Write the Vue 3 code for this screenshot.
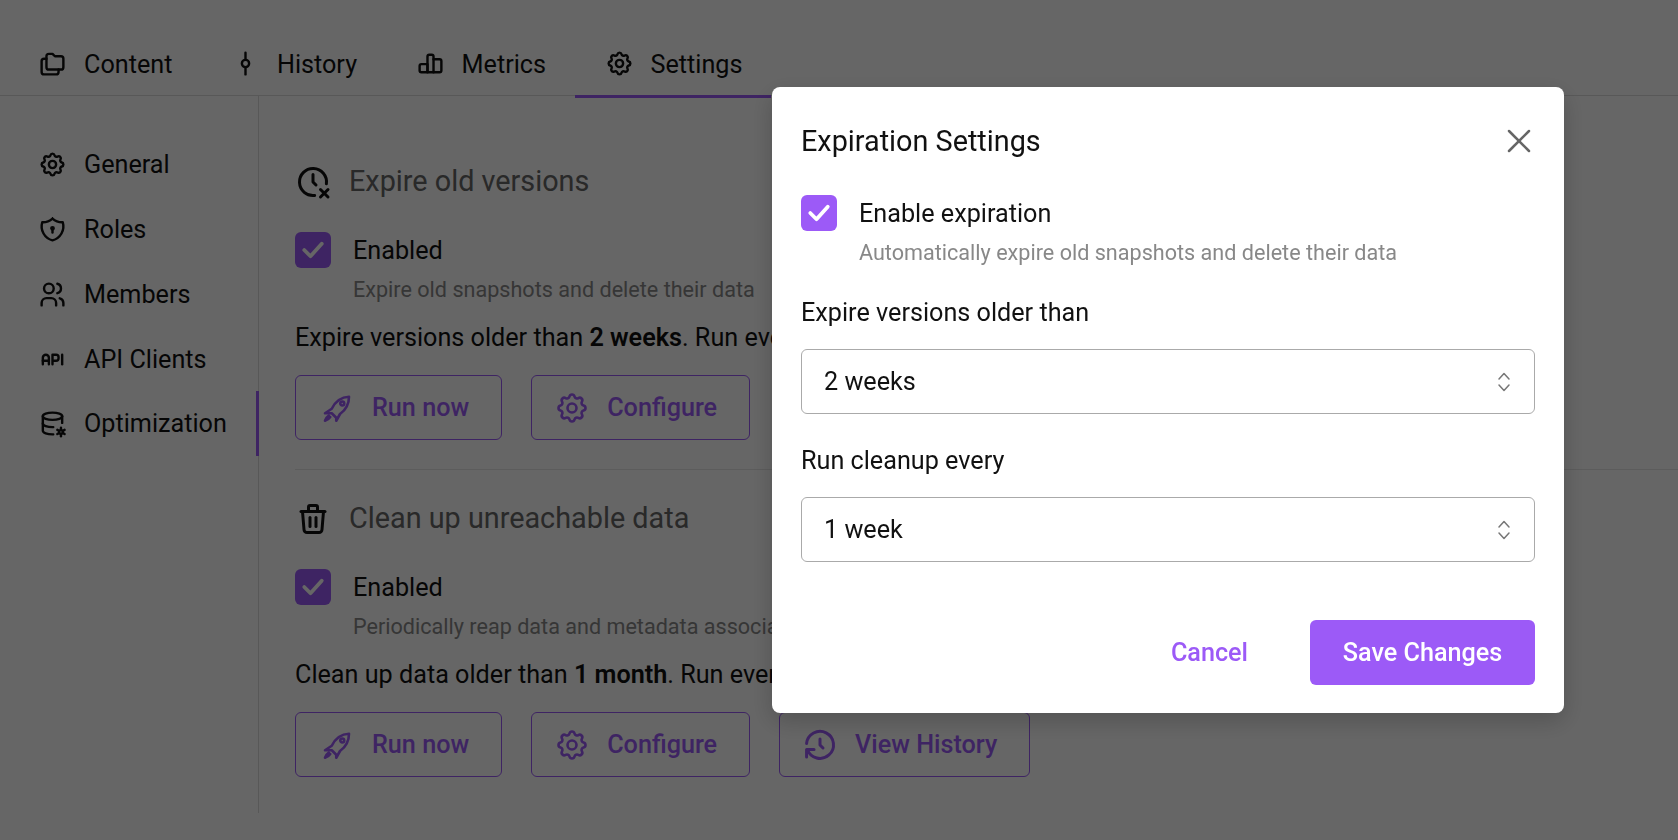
<script setup>
import { h } from 'vue'

const paths = {
  folders: ['M9 4h3l2 2h5a2 2 0 0 1 2 2v7a2 2 0 0 1 -2 2h-10a2 2 0 0 1 -2 -2v-9a2 2 0 0 1 2 -2', 'M17 17v2a2 2 0 0 1 -2 2h-10a2 2 0 0 1 -2 -2v-9a2 2 0 0 1 2 -2h2'],
  commit: ['M9 12a3 3 0 1 0 6 0a3 3 0 1 0 -6 0', 'M12 3v6', 'M12 15v6'],
  chart: ['M3 14a1.5 1.5 0 0 1 1.5 -1.5h5v6.8h-5a1.5 1.5 0 0 1 -1.5 -1.5z', 'M9.5 6.2a1.5 1.5 0 0 1 1.5 -1.5h2a1.5 1.5 0 0 1 1.5 1.5v13.1h-5z', 'M14.5 8.5h5a1.5 1.5 0 0 1 1.5 1.5v7.8a1.5 1.5 0 0 1 -1.5 1.5h-5'],
  settings: ['M10.325 4.317c.426 -1.756 2.924 -1.756 3.35 0a1.724 1.724 0 0 0 2.573 1.066c1.543 -.94 3.31 .826 2.37 2.37a1.724 1.724 0 0 0 1.065 2.572c1.756 .426 1.756 2.924 0 3.35a1.724 1.724 0 0 0 -1.066 2.573c.94 1.543 -.826 3.31 -2.37 2.37a1.724 1.724 0 0 0 -2.572 1.065c-.426 1.756 -2.924 1.756 -3.35 0a1.724 1.724 0 0 0 -2.573 -1.066c-1.543 .94 -3.31 -.826 -2.37 -2.37a1.724 1.724 0 0 0 -1.065 -2.572c-1.756 -.426 -1.756 -2.924 0 -3.35a1.724 1.724 0 0 0 1.066 -2.573c-.94 -1.543 .826 -3.31 2.37 -2.37c1 .608 2.296 .07 2.572 -1.065z', 'M9 12a3 3 0 1 0 6 0a3 3 0 1 0 -6 0'],
  shield: ['M12 3a12 12 0 0 0 8.5 3a12 12 0 0 1 -8.5 15a12 12 0 0 1 -8.5 -15a12 12 0 0 0 8.5 -3', 'M11 11a1 1 0 1 0 2 0a1 1 0 1 0 -2 0', 'M12 12v2.5'],
  users: ['M5 7a4 4 0 1 0 8 0a4 4 0 1 0 -8 0', 'M3 21v-2a4 4 0 0 1 4 -4h4a4 4 0 0 1 4 4v2', 'M16 3.13a4 4 0 0 1 0 7.75', 'M21 21v-2a4 4 0 0 0 -3 -3.85'],
  api: ['M4 13h5', 'M12 16v-8h3a2 2 0 0 1 2 2v1a2 2 0 0 1 -2 2h-3', 'M20 8v8', 'M9 16v-5.5a2.5 2.5 0 0 0 -5 0v5.5'],
  database: ['M4 6c0 1.657 3.582 3 8 3s8 -1.343 8 -3s-3.582 -3 -8 -3s-8 1.343 -8 3', 'M4 6v6c0 1.657 3.582 3 8 3c.21 0 .42 -.003 .626 -.01', 'M20 11.5v-5.5', 'M4 12v6c0 1.657 3.582 3 8 3c.211 0 .42 -.003 .625 -.01', 'M17.5 19a1.5 1.5 0 1 0 3 0a1.5 1.5 0 1 0 -3 0', 'M19 15.5v1.5', 'M19 21v1.5', 'M22 17.25l-1.3 .75', 'M17.3 20l-1.3 .75', 'M16 17.25l1.3 .75', 'M20.7 20l1.3 .75'],
  clockX: ['M20.926 13.15a9 9 0 1 0 -7.835 7.784', 'M12 7v5l2 2', 'M22 22l-5 -5', 'M17 22l5 -5'],
  trash: ['M4 7h16', 'M10 11v6', 'M14 11v6', 'M5 7l1 12a2 2 0 0 0 2 2h8a2 2 0 0 0 2 -2l1 -12', 'M9 7v-3a1 1 0 0 1 1 -1h4a1 1 0 0 1 1 1v3'],
  rocket: ['M20 4.5c-5 .2 -9 3 -11.5 8l-4.5 3h4.5l3 3v2l2.5 -4.5c3.5 -2.5 6 -6.5 6 -11.5z', 'M6.5 17c-1.2 .8 -2 2 -2.5 3.5c1.5 -.5 2.7 -1.3 3.5 -2.5', 'M14.2 9a1.3 1.3 0 1 0 2.6 0a1.3 1.3 0 1 0 -2.6 0'],
  history: ['M12 8v4l2 2', 'M3.05 11a9 9 0 1 1 .5 4m-.5 5v-5h5'],
  check: ['M5 12l5 5l9 -10'],
  close: ['M4 4l16 16', 'M20 4l-16 16'],
  selector: ['M7 9l5 -5.5l5 5.5', 'M7 15l5 5.5l5 -5.5']
}

const Icon = ({ name, size = 29, width = 2 }) =>
  h('svg', {
    width: size,
    height: size,
    viewBox: '0 0 24 24',
    fill: 'none',
    stroke: 'currentColor',
    'stroke-width': width,
    'stroke-linecap': 'round',
    'stroke-linejoin': 'round'
  }, paths[name].map((d) => h('path', { d })))
Icon.props = ['name', 'size', 'width']

const tabs = [
  { label: 'Content', icon: 'folders' },
  { label: 'History', icon: 'commit' },
  { label: 'Metrics', icon: 'chart' },
  { label: 'Settings', icon: 'settings', active: true }
]

const navItems = [
  { label: 'General', icon: 'settings' },
  { label: 'Roles', icon: 'shield' },
  { label: 'Members', icon: 'users' },
  { label: 'API Clients', icon: 'api' },
  { label: 'Optimization', icon: 'database', active: true }
]

const sections = [
  {
    title: 'Expire old versions',
    icon: 'clockX',
    desc: 'Expire old snapshots and delete their data',
    before: 'Expire versions older than ',
    age: '2 weeks',
    after: '. Run every 1 week.',
    history: false
  },
  {
    title: 'Clean up unreachable data',
    icon: 'trash',
    desc: 'Periodically reap data and metadata associated with unreachable snapshots',
    before: 'Clean up data older than ',
    age: '1 month',
    after: '. Run every 1 week.',
    history: true
  }
]

const fields = [
  { label: 'Expire versions older than', value: '2 weeks' },
  { label: 'Run cleanup every', value: '1 week' }
]
</script>

<template>
  <div class="page">
    <nav class="tabs">
      <a v-for="tab in tabs" :key="tab.label" class="tab" :class="{ active: tab.active }">
        <Icon :name="tab.icon" />
        <span>{{ tab.label }}</span>
      </a>
    </nav>

    <div class="body">
      <aside class="sidebar">
        <a v-for="item in navItems" :key="item.label" class="nav-item" :class="{ active: item.active }">
          <Icon :name="item.icon" />
          <span>{{ item.label }}</span>
        </a>
      </aside>

      <main class="main">
        <section v-for="section in sections" :key="section.title" class="section">
          <h2 class="section-title">
            <Icon class="title-icon" :name="section.icon" :size="36" />
            <span>{{ section.title }}</span>
          </h2>
          <div class="check-row">
            <span class="checkbox"><Icon name="check" :size="30" :width="3" /></span>
            <span>Enabled</span>
          </div>
          <p class="desc">{{ section.desc }}</p>
          <p class="summary">{{ section.before }}<b>{{ section.age }}</b>{{ section.after }}</p>
          <div class="actions">
            <button class="outline run"><Icon name="rocket" :size="36" :width="1.75" />Run now</button>
            <button class="outline"><Icon name="settings" :size="36" :width="1.75" />Configure</button>
            <button v-if="section.history" class="outline"><Icon name="history" :size="36" />View History</button>
          </div>
        </section>
      </main>
    </div>

    <div class="overlay"></div>

    <div class="modal">
      <header class="modal-head">
        <h3>Expiration Settings</h3>
        <Icon class="close" name="close" :size="30" />
      </header>
      <div class="check-row">
        <span class="checkbox"><Icon name="check" :size="30" :width="3" /></span>
        <span>Enable expiration</span>
      </div>
      <p class="desc">Automatically expire old snapshots and delete their data</p>
      <div v-for="field in fields" :key="field.label" class="field">
        <label>{{ field.label }}</label>
        <div class="select">
          <span>{{ field.value }}</span>
          <Icon class="selector" name="selector" :size="24" :width="1.5" />
        </div>
      </div>
      <footer class="modal-foot">
        <button class="cancel">Cancel</button>
        <button class="save">Save Changes</button>
      </footer>
    </div>
  </div>
</template>

<style>
html, body {
  margin: 0;
  background: #fff;
  overflow: hidden;
}
</style>

<style scoped>
.page {
  height: 840px;
  font-family: Roboto, sans-serif;
  font-size: 25.2px;
  color: #111;
  overflow: hidden;
}

.tabs {
  display: flex;
  height: 95px;
  padding-left: 8px;
  border-bottom: 1px solid #ddd;
}

.tab {
  display: flex;
  align-items: center;
  gap: 17px;
  padding: 32px 28.5px 0 30px;
  height: 63px;
  margin-bottom: -3px;
  border-bottom: 3px solid transparent;
}

.tab span {
  padding-top: 2px;
}

.tab.active {
  border-bottom-color: #9c5af7;
}

.body {
  display: flex;
}

.sidebar {
  width: 259px;
  height: 717px;
  padding-top: 36.3px;
  box-sizing: border-box;
  border-right: 1px solid #ddd;
  flex-shrink: 0;
}

.nav-item {
  display: flex;
  align-items: center;
  gap: 17px;
  height: 64.8px;
  padding-left: 38px;
  margin-right: -1px;
  box-sizing: border-box;
}

.nav-item.active {
  border-right: 3px solid #9c5af7;
}

.main {
  flex: 1;
  padding: 68px 0 0 36px;
}

.section + .section {
  border-top: 1px solid #e6e6e6;
  margin-top: 29px;
  padding-top: 31px;
}

.section-title {
  display: flex;
  align-items: center;
  gap: 18px;
  height: 36px;
  margin: 0;
  font-size: 28.8px;
  font-weight: 400;
  color: #666;
}

.section-title span {
  padding-bottom: 2px;
}

.title-icon {
  color: #111;
}

.check-row {
  display: flex;
  align-items: center;
  gap: 22px;
  height: 36px;
}

.section .check-row {
  margin-top: 32px;
}

.checkbox {
  display: flex;
  align-items: center;
  justify-content: center;
  width: 36px;
  height: 36px;
  border-radius: 6px;
  background: #9c5af7;
  color: #fff;
}

.desc {
  margin: 7px 0 0 58px;
  font-size: 21.6px;
  line-height: 30px;
  color: #888;
}

.summary {
  margin: 15px 0 0;
  line-height: 36px;
}

.summary b {
  font-weight: 600;
}

.actions {
  display: flex;
  gap: 29px;
  margin-top: 19px;
}

button {
  font-family: inherit;
  font-size: 25.2px;
  font-weight: 500;
  height: 65px;
  border-radius: 6px;
  cursor: pointer;
}

.outline {
  display: flex;
  align-items: center;
  gap: 17px;
  padding: 0 32px 0 22px;
  background: none;
  border: 1px solid #9c5af7;
  color: #9c5af7;
  box-sizing: border-box;
}

.outline.run {
  padding-left: 23px;
}

.overlay {
  position: fixed;
  inset: 0;
  background: rgba(0, 0, 0, 0.6);
}

.modal {
  position: fixed;
  left: 772px;
  top: 87px;
  width: 792px;
  height: 626px;
  padding: 36px 29px 0;
  box-sizing: border-box;
  background: #fff;
  border-radius: 8px;
  box-shadow: 0 8px 24px rgba(0, 0, 0, 0.2);
}

.modal-head {
  display: flex;
  align-items: center;
  justify-content: space-between;
  height: 36px;
  margin-bottom: 36px;
}

.modal-head h3 {
  margin: 0;
  font-size: 28.8px;
  font-weight: 400;
}

.close {
  color: #666;
  margin-right: 1px;
}

.field {
  margin-top: 27px;
}

.field + .field {
  margin-top: 29px;
}

.field label {
  display: block;
  line-height: 36px;
}

.select {
  display: flex;
  align-items: center;
  justify-content: space-between;
  height: 65px;
  margin-top: 18px;
  padding: 0 18px 0 22px;
  border: 1px solid #aaa;
  border-radius: 6px;
  box-sizing: border-box;
}

.selector {
  color: #777;
}

.modal-foot {
  display: flex;
  justify-content: flex-end;
  align-items: center;
  gap: 62px;
  margin-top: 58px;
}

.cancel {
  border: none;
  background: none;
  padding: 0;
  color: #9c5af7;
}

.save {
  width: 225px;
  border: none;
  background: #9c5af7;
  color: #fff;
}
</style>
